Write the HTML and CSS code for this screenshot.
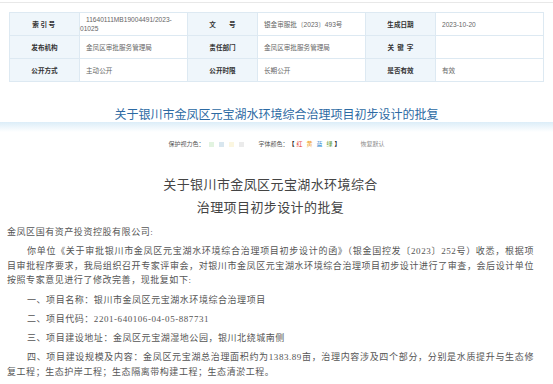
FILE: index.html
```html
<!DOCTYPE html>
<html>
<head>
    <meta charset="utf-8">
    <title>关于银川市金凤区元宝湖水环境综合治理项目初步设计的批复</title>
    <link rel="stylesheet" href="styles.css">
</head>
<body>
    <div class="topline"></div>

    <table class="info-table">
        <colgroup>
            <col class="col-label"><col class="col-value">
            <col class="col-label"><col class="col-value">
            <col class="col-label"><col class="col-value">
        </colgroup>
        <tr>
            <th class="spaced">索引号</th>
            <td>11640111MB19004491/2023-01025</td>
            <th>文　　号</th>
            <td>银金审服批〔2023〕493号</td>
            <th>生成日期</th>
            <td>2023-10-20</td>
        </tr>
        <tr>
            <th>发布机构</th>
            <td>金凤区审批服务管理局</td>
            <th>责任部门</th>
            <td>金凤区审批服务管理局</td>
            <th class="wide">关键字</th>
            <td></td>
        </tr>
        <tr>
            <th>公开方式</th>
            <td>主动公开</td>
            <th>公开时限</th>
            <td>长期公开</td>
            <th>是否有效</th>
            <td>有效</td>
        </tr>
    </table>

    <div class="page-title">关于银川市金凤区元宝湖水环境综合治理项目初步设计的批复</div>
    <div class="title-shade"></div>

    <div class="toolbar">
        <span class="tool-label">保护视力色：</span>
        <span class="swatch sw-green"></span>
        <span class="swatch sw-blue"></span>
        <span class="swatch sw-yellow"></span>
        <span class="swatch sw-gray"></span>
        <span class="tool-label font-label">字体颜色：</span>
        <span class="bracket">【</span>
        <span class="fc fc-red">红</span>
        <span class="fc fc-yellow">黄</span>
        <span class="fc fc-blue">蓝</span>
        <span class="fc fc-green">绿</span>
        <span class="bracket">】</span>
        <span class="reset">恢复默认</span>
    </div>

    <div class="doc">
        <h1 class="doc-title">关于银川市金凤区元宝湖水环境综合<br>治理项目初步设计的批复</h1>
        <p class="to">金凤区国有资产投资控股有限公司:</p>
        <p>你单位《关于审批银川市金凤区元宝湖水环境综合治理项目初步设计的函》（银金国控发〔2023〕252号）收悉，根据项目审批程序要求，我局组织召开专家评审会，对银川市金凤区元宝湖水环境综合治理项目初步设计进行了审查，会后设计单位按照专家意见进行了修改完善，现批复如下:</p>
        <p>一、项目名称：银川市金凤区元宝湖水环境综合治理项目</p>
        <p>二、项目代码：2201-640106-04-05-887731</p>
        <p>三、项目建设地址：金凤区元宝湖湿地公园，银川北绕城南侧</p>
        <p>四、项目建设规模及内容：金凤区元宝湖总治理面积约为1383.89亩，治理内容涉及四个部分，分别是水质提升与生态修复工程；生态护岸工程；生态隔离带构建工程；生态清淤工程。</p>
    </div>
</body>
</html>
```

FILE: styles.css
```css
body {
    margin: 0;
    font-family: "Noto Sans CJK SC", sans-serif;
    color: #333;
    background: #fff;
}
.topline {
    height: 2px;
    border-bottom: 1px solid #e8e8e8;
}

.info-table {
    margin: 9px 0 0 9px;
    width: 533px;
    border-collapse: collapse;
    table-layout: fixed;
    font-size: 6.6px;
}
.col-label {
    width: 70px;
}
.col-value {
    width: 108px;
}
.info-table th,
.info-table td {
    height: 22px;
    border: 1px solid #dde9f2;
    line-height: 9px;
    padding: 0;
}
.info-table th {
    background: #eff6fb;
    color: #333;
    font-weight: bold;
    text-align: center;
}
.info-table th.spaced {
    letter-spacing: 1.5px;
}
.info-table th.wide {
    letter-spacing: 3px;
    text-indent: 3px;
}
.info-table td {
    color: #666;
    font-family: "Liberation Sans", "Noto Sans CJK SC", sans-serif;
    text-indent: 6px;
}

.page-title {
    margin-top: 23px;
    height: 17px;
    line-height: 17px;
    text-align: center;
    font-size: 12px;
    color: #2c6aa3;
}
.title-shade {
    height: 10px;
    background: linear-gradient(#dcedf8, #fff);
}

.toolbar {
    margin-top: 7px;
    height: 10px;
    line-height: 10px;
    display: flex;
    justify-content: center;
    align-items: center;
    font-size: 6px;
    color: #555;
}
.swatch {
    width: 5px;
    height: 5px;
    margin-left: 5px;
}
.sw-green { background: #e2f3e0; }
.sw-blue { background: #d8e6ef; }
.sw-yellow { background: #fbf6e0; }
.sw-gray { background: #ebebeb; }
.font-label {
    margin-left: 14px;
}
.bracket {
    color: #222;
    font-weight: bold;
}
.fc {
    margin: 0 2px;
}
.fc-red { color: #e3392f; }
.fc-yellow { color: #f0a020; }
.fc-blue { color: #2a8ad0; }
.fc-green { color: #5c9a35; }
.reset {
    margin-left: 20px;
    color: #888;
}

.doc {
    padding: 0 19px 0 7px;
    color: #555;
}
.doc-title {
    margin: 24px 0 6px;
    font-family: "Liberation Serif", "Noto Sans CJK SC", serif;
    font-size: 13px;
    font-weight: normal;
    letter-spacing: 0.4px;
    line-height: 23px;
    text-align: center;
    color: #444;
}
.doc p {
    margin: 0 0 4.8px;
    font-family: "Liberation Serif", "Noto Sans CJK SC", serif;
    font-size: 9px;
    letter-spacing: 0.55px;
    line-height: 14.5px;
    text-align: justify;
    text-indent: 20px;
}
.doc p.to {
    text-indent: 0;
}
```
